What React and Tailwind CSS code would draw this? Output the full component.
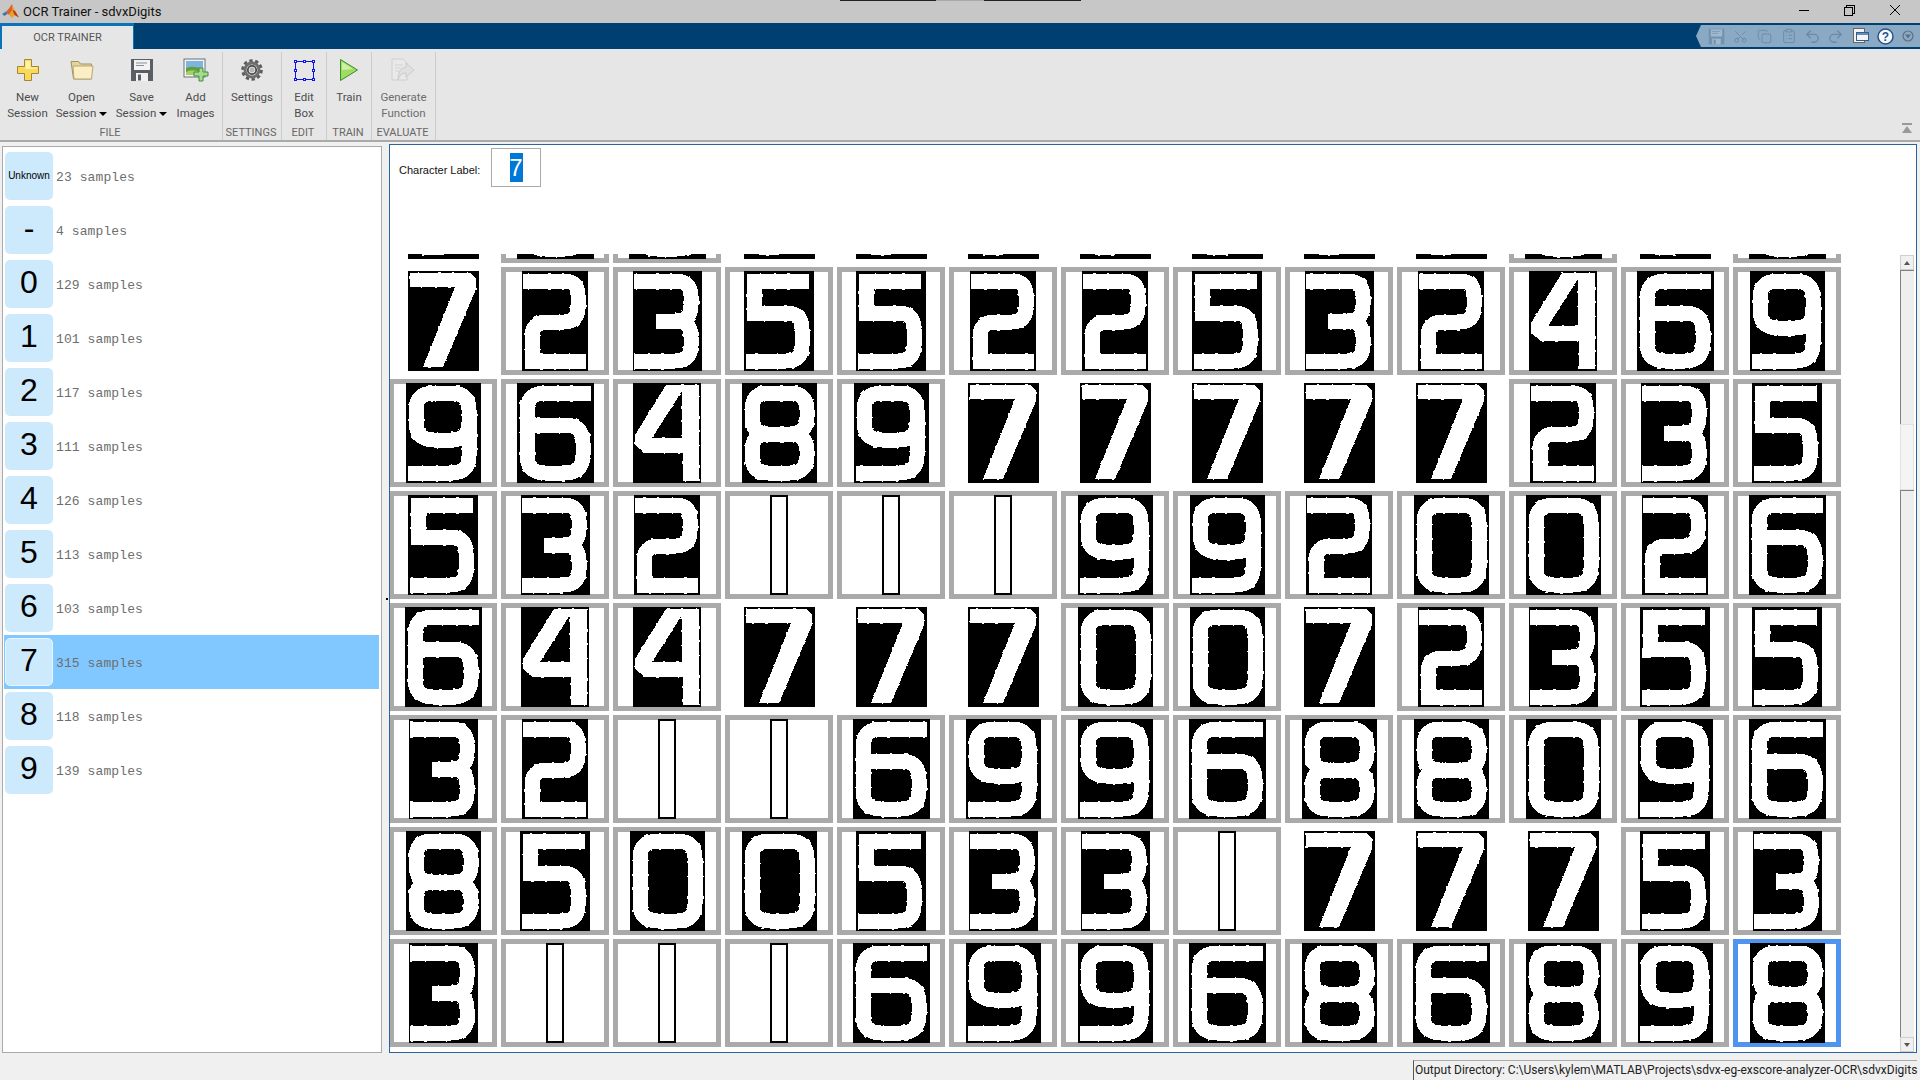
import { Scissors, Copy, ClipboardList, Undo2, Redo2 } from "lucide-react";

const UI_FONT = "font-['Roboto','Liberation_Sans',sans-serif]";

// sample thumbnails are binary images, drawn as white strokes on black
const SAMPLES = {
  0: { w: 75, d: "M28 10 H47 Q65 10 65 27 V73 Q65 90 47 90 H28 Q10 90 10 73 V27 Q10 10 28 10 Z" },
  2: { w: 66, d: "M1 10 H42 Q56 10 56 24 V36 Q56 51 42 51 H25 Q10 51 10 66 V90 H64" },
  3: { w: 69, d: "M1 10 H42 Q58 10 58 25 V34 Q58 50 42 50 H23 M42 50 Q58 50 58 66 V75 Q58 90 42 90 H1" },
  5: { w: 70, d: "M65 10 H10 V42 H42 Q58 42 58 58 V75 Q58 90 42 90 H2" },
  6: { w: 77, d: "M74 10 H28 Q10 10 10 28 V72 Q10 90 28 90 H48 Q66 90 66 72 V60 Q66 42 48 42 H10" },
  8: { w: 75, d: "M26 10 H48 Q65 10 65 27 V34 Q65 51 48 51 H26 Q10 51 10 34 V27 Q10 10 26 10 Z M26 51 H48 Q65 51 65 68 V73 Q65 90 48 90 H26 Q10 90 10 73 V68 Q10 51 26 51 Z" },
  9: { w: 75, d: "M28 10 H45 Q63 10 63 27 V39 Q63 57 45 57 H28 Q10 57 10 39 V27 Q10 10 28 10 Z M63 30 V73 Q63 90 45 90 H2" },
};

// 4 and 7 have slanted strokes of changing width, so they are filled shapes
const FILLED = {
  4: { w: 68, d: "M33 2 H66 V98 H50 V70 H12 L2 62 V52 Z M49 8 V55 H19 Z" },
  7: { w: 71, d: "M2 2 H62 L68 8 V18 L35 96 H15 L47 16 H2 Z" },
};

const ROWS = [
  "7667777777676",
  "7235522532469",
  "9648977777235",
  "5321119920026",
  "6447770072355",
  "3211699688096",
  "8500533177753",
  "3111699686898",
];

function SampleImage({ digit, seed }) {
  if (digit === "1") {
    return <div className="h-[100px] w-[18px] shrink-0 border-2 border-black bg-white" />;
  }
  const filled = FILLED[digit];
  const stroked = SAMPLES[digit];
  const w = (filled || stroked).w;
  // the dashed under-stroke roughens the edges like a thresholded image
  return (
    <svg width={w} height="100" viewBox={`0 0 ${w} 100`} className="shrink-0" shapeRendering="crispEdges">
      <rect width={w} height="100" fill="#000" />
      {filled ? (
        <>
          <path d={filled.d} fill="#fff" fillRule="evenodd" />
          <path d={filled.d} fill="none" stroke="#fff" strokeWidth="1.4" strokeDasharray="2 13 1 19 3 11" strokeDashoffset={seed} />
        </>
      ) : (
        <>
          <path d={stroked.d} fill="none" stroke="#fff" strokeWidth="17" strokeDasharray="2 13 1 19 3 11" strokeDashoffset={seed} />
          <path d={stroked.d} fill="none" stroke="#fff" strokeWidth="15" />
        </>
      )}
    </svg>
  );
}

function SampleCell({ digit, active, seed }) {
  let border = "border-[#aaaaaa]";
  if (digit === "7") border = "border-white";
  if (active) border = "border-[#4f94ef]";
  return (
    <div className={`flex h-[108px] w-[108px] items-center justify-center border-[5px] bg-white ${border}`}>
      <SampleImage digit={digit} seed={seed} />
    </div>
  );
}

const LABELS = [
  { label: "Unknown", count: 23 },
  { label: "-", count: 4 },
  { label: "0", count: 129 },
  { label: "1", count: 101 },
  { label: "2", count: 117 },
  { label: "3", count: 111 },
  { label: "4", count: 126 },
  { label: "5", count: 113 },
  { label: "6", count: 103 },
  { label: "7", count: 315, selected: true },
  { label: "8", count: 118 },
  { label: "9", count: 139 },
];

function LabelRow({ label, count, selected }) {
  return (
    <div className={`flex h-[54px] w-[375px] items-center pl-px ${selected ? "bg-[#80c8ff]" : ""}`}>
      <div className={`flex h-[48px] w-[48px] items-center justify-center rounded-[5px] bg-[#cdeafd] font-['Liberation_Sans',sans-serif] text-black ${selected ? "border border-[#e6f5ff]" : ""}`}>
        {label === "Unknown" ? (
          <span className="text-[10px] leading-none">{label}</span>
        ) : (
          <span className="-mt-1 text-[32px] leading-none">{label}</span>
        )}
      </div>
      <span className="ml-[3px] mt-[4px] font-['Liberation_Mono',monospace] text-[13px] tracking-[0.1px] text-[#6e6e6e]">{count} samples</span>
    </div>
  );
}

function MatlabLogo() {
  return (
    <svg width="17" height="16" viewBox="0 0 17 16">
      <path d="M0 10 L4 7.5 L6 9.5 L2.5 12 Z" fill="#3a79b0" />
      <path d="M4 7.5 L7 4.5 L10 0 L11 5 L7 11 Z" fill="#d9622b" />
      <path d="M10 0 L13 7 L17 13.5 L12.5 11 L10 14 L7 11 L10.5 6 Z" fill="#f0a020" />
      <path d="M10.5 6 L13 7 L17 13.5 L12.5 11 Z" fill="#b83a1c" />
    </svg>
  );
}

function NewIcon() {
  return (
    <svg width="24" height="24" viewBox="0 0 24 24">
      <path d="M8.5 1.5 H15.5 V8.5 H22.5 V15.5 H15.5 V22.5 H8.5 V15.5 H1.5 V8.5 H8.5 Z" fill="#f8d95a" stroke="#a58632" />
      <path d="M9.5 3 H14.5 V9.5 H21 V11 H9.5 Z" fill="#fdf0a8" />
    </svg>
  );
}

function OpenIcon() {
  return (
    <svg width="24" height="24" viewBox="0 0 24 24">
      <path d="M1 3.5 H8.5 L10.5 6 H21.5 V21 H3.5 Z" fill="#e8d398" stroke="#a39163" />
      <path d="M3 8 H23 L21.5 21 H4 Z" fill="#fbeec4" stroke="#b7a777" />
    </svg>
  );
}

function SaveIcon({ body = "#5a5f63", face = "#f2f2f2", line = "#8a8f92", size = 24 }) {
  return (
    <svg width={size} height={size} viewBox="0 0 24 24">
      <path d="M1 1 H23 V23 H1 Z" fill={body} />
      <rect x="4" y="2" width="16" height="10" fill={face} />
      <rect x="6" y="4.5" width="11" height="1" fill={line} />
      <rect x="6" y="7" width="8" height="1" fill={line} />
      <rect x="6" y="15" width="12" height="8" fill={face} />
      <rect x="8" y="16.5" width="3" height="6" fill={body} />
    </svg>
  );
}

function AddImagesIcon() {
  return (
    <svg width="26" height="24" viewBox="0 0 26 24">
      <rect x="1" y="1" width="21" height="18" fill="#f4f4f4" stroke="#6d7378" />
      <rect x="3" y="3" width="17" height="7" fill="#7fb4e0" />
      <path d="M3 10 Q10 7 20 11 V17 H3 Z" fill="#5f9f3c" />
      <path d="M3 14 Q9 10 20 15 V17 H3 Z" fill="#a7cf6a" />
      <path d="M16 10 H20 V14 H25 V18 H20 V23 H16 V18 H11 V14 H16 Z" fill="#a6dc8c" stroke="#3f8f3f" />
    </svg>
  );
}

function GearIcon() {
  return (
    <svg width="22" height="22" viewBox="0 0 22 22">
      <circle cx="11" cy="11" r="9" fill="none" stroke="#5c5c5c" strokeWidth="3.6" strokeDasharray="3.2 2.45" />
      <circle cx="11" cy="11" r="7" fill="none" stroke="#6f6f6f" strokeWidth="3" />
      <circle cx="11" cy="11" r="4.2" fill="none" stroke="#4b4b4b" strokeWidth="1.8" />
      <circle cx="11" cy="11" r="2.4" fill="#b5b5b5" />
    </svg>
  );
}

function EditBoxIcon() {
  const handles = [[1, 1], [10, 1], [19, 1], [1, 10], [19, 10], [1, 19], [10, 19], [19, 19]];
  return (
    <svg width="22" height="22" viewBox="0 0 22 22" shapeRendering="crispEdges">
      <rect x="2" y="2" width="18" height="18" fill="none" stroke="#1212e6" />
      {handles.map(([x, y]) => (
        <rect key={`${x}-${y}`} x={x} y={y} width="2.5" height="2.5" fill="#fff" stroke="#1212e6" />
      ))}
    </svg>
  );
}

function TrainIcon() {
  return (
    <svg width="20" height="24" viewBox="0 0 20 24">
      <path d="M1.5 1.5 L18.5 12 L1.5 22.5 Z" fill="#9fdc62" stroke="#3f8a2a" />
      <path d="M3 4 L14 11 L3 12 Z" fill="#cdf0a6" />
    </svg>
  );
}

function GenerateIcon() {
  return (
    <svg width="26" height="24" viewBox="0 0 26 24" opacity="0.55">
      <path d="M2 1 H13 L17 5 V22 H2 Z" fill="#ececec" stroke="#bdbdbd" />
      <path d="M5 7 H13 M5 10 H11 M5 13 H9" stroke="#c4c4c4" />
      <path d="M16 5 L24 12 L16 19 V15 Q10 15 8 22 Q8 10 16 9 Z" fill="#dcdcdc" stroke="#b5b5b5" />
    </svg>
  );
}

function HelpIcon() {
  return (
    <svg width="17" height="17" viewBox="0 0 17 17">
      <circle cx="8.5" cy="8.5" r="7.5" fill="#f7f9fc" stroke="#27558a" strokeWidth="1.5" />
      <text x="8.5" y="12.8" textAnchor="middle" fontSize="12" fontWeight="700" fontFamily="Liberation Sans" fill="#27558a">?</text>
    </svg>
  );
}

function ToolButton({ icon, lines, caret, className = "" }) {
  return (
    <div className={`flex flex-col items-center pt-[6px] ${className}`}>
      <div className="flex h-[24px] items-center justify-center">{icon}</div>
      <div className={`mt-[7px] text-center text-[11.5px] leading-[16px] ${caret === "off" ? "text-[#6d6d6d]" : "text-[#4d4d4d]"}`}>
        {lines.map((line, i) => (
          <div key={line} className="whitespace-nowrap">
            {line}
            {caret === true && i === 1 && (
              <span className="ml-[3px] inline-block border-x-[4px] border-t-[4px] border-x-transparent border-t-black align-middle" />
            )}
          </div>
        ))}
      </div>
    </div>
  );
}

function Section({ title, width, children }) {
  return (
    <div className={`mt-[3px] flex h-[88px] flex-col justify-between border-r border-[#cccccc] ${width}`}>
      <div className="flex justify-center gap-[3px]">{children}</div>
      <div className="pr-[2px] text-center text-[11px] leading-[14px] text-[#666666]">{title}</div>
    </div>
  );
}

function Scrollbar() {
  return (
    <div className="ml-auto mr-[2px] mt-px flex w-[14px] shrink-0 flex-col bg-[#eeeeee]">
      <div className="flex h-[15px] items-center justify-center border border-[#cfcfcf] bg-[#f0f0f0]">
        <div className="border-x-[3px] border-b-[4px] border-x-transparent border-b-[#555555]" />
      </div>
      <div className="h-[154px] border-l border-t border-[#808080] bg-[#eeeeee]" />
      <div className="h-[66px] border border-[#e2e2e2] bg-[#f4f4f4]" />
      <div className="flex-1 border-l border-t border-[#808080] bg-[#eeeeee]" />
      <div className="flex h-[15px] items-center justify-center border border-[#cfcfcf] bg-[#f0f0f0]">
        <div className="border-x-[3px] border-t-[4px] border-x-transparent border-t-[#555555]" />
      </div>
    </div>
  );
}

export default function App() {
  return (
    <div className={`flex h-screen w-full flex-col overflow-hidden bg-[#f0f0f0] ${UI_FONT}`}>
      {/* Title bar */}
      <div className="relative flex h-[23px] shrink-0 items-center bg-[#c7c7c7] pl-[2px]">
        <div className="absolute left-[840px] top-0 flex h-px">
          <div className="w-[96px] bg-[#222222]" />
          <div className="w-[48px] bg-[#a8a8a8]" />
          <div className="w-[97px] bg-[#222222]" />
        </div>
        <MatlabLogo />
        <span className="ml-[4px] text-[13px] text-[#111111]">OCR Trainer - sdvxDigits</span>
        <div className="-mt-[3px] ml-auto flex items-center">
          <svg width="12" height="12" viewBox="0 0 12 12" className="mr-[33px]" shapeRendering="crispEdges">
            <path d="M1 6 H11" stroke="#000" />
          </svg>
          <svg width="12" height="12" viewBox="0 0 12 12" className="mr-[34px]" shapeRendering="crispEdges">
            <path d="M3 3 V1 H11 V9 H9 M1 3 H9 V11 H1 Z" fill="none" stroke="#000" />
          </svg>
          <svg width="12" height="12" viewBox="0 0 12 12" className="mr-[19px]">
            <path d="M1 1 L11 11 M11 1 L1 11" stroke="#000" />
          </svg>
        </div>
      </div>

      {/* Tab strip and quick access bar */}
      <div className="flex h-[26px] shrink-0 bg-[#003f72]">
        <div className="h-full w-[134px] bg-[#0a73b8] pl-[2px] pr-px pt-[3px]">
          <div className="flex h-full items-center justify-center bg-[#e6e6e6] pt-[2px] text-[11px] text-[#555555]">OCR TRAINER</div>
        </div>
        <div className="ml-auto mt-[2px] flex h-[22px] w-[224px] items-center bg-[#8aa9c4] pl-[12px] text-[#6d8ba6] [clip-path:polygon(0_50%,5px_0,100%_0,100%_100%,5px_100%)]">
          <SaveIcon body="#7393ad" face="#a0b8cd" line="#7393ad" size={17} />
          <Scissors size={15} strokeWidth={1.5} className="ml-[8px] -rotate-90" />
          <Copy size={15} strokeWidth={1.5} className="ml-[9px]" />
          <ClipboardList size={16} strokeWidth={1.5} className="ml-[9px]" />
          <Undo2 size={17} strokeWidth={2} className="ml-[7px]" />
          <Redo2 size={17} strokeWidth={2} className="ml-[6px]" />
          <svg width="16" height="16" viewBox="0 0 16 16" className="ml-[9px]" shapeRendering="crispEdges">
            <rect x="0.5" y="0.5" width="11" height="14" fill="#f2f2f2" stroke="#666" />
            <rect x="3.5" y="4.5" width="12" height="8" fill="#f4f4f4" stroke="#345f8c" />
            <rect x="4" y="5" width="11" height="2" fill="#5f8fbd" />
          </svg>
          <div className="ml-[8px] flex"><HelpIcon /></div>
          <svg width="12" height="12" viewBox="0 0 12 12" className="ml-[8px]">
            <circle cx="6" cy="6" r="5" fill="none" stroke="#5d6f80" strokeWidth="1.2" />
            <path d="M3 4.5 H9 L6 8.5 Z" fill="#5d6f80" />
          </svg>
        </div>
      </div>

      {/* Toolstrip */}
      <div className="flex h-[93px] shrink-0 items-start border-b-2 border-[#a9a9a9] bg-[#e6e6e6]">
        <Section title="FILE" width="w-[223px]">
          <ToolButton icon={<NewIcon />} lines={["New", "Session"]} className="w-[46px]" />
          <ToolButton icon={<OpenIcon />} lines={["Open", "Session"]} caret className="w-[56px]" />
          <ToolButton icon={<SaveIcon />} lines={["Save", "Session"]} caret className="w-[58px]" />
          <ToolButton icon={<AddImagesIcon />} lines={["Add", "Images"]} className="w-[44px]" />
        </Section>
        <Section title="SETTINGS" width="w-[59px]">
          <ToolButton icon={<GearIcon />} lines={["Settings"]} />
        </Section>
        <Section title="EDIT" width="w-[45px]">
          <ToolButton icon={<EditBoxIcon />} lines={["Edit", "Box"]} />
        </Section>
        <Section title="TRAIN" width="w-[45px]">
          <ToolButton icon={<TrainIcon />} lines={["Train"]} />
        </Section>
        <Section title="EVALUATE" width="w-[64px]">
          <ToolButton icon={<GenerateIcon />} lines={["Generate", "Function"]} caret="off" />
        </Section>
        <div className="ml-auto mr-[8px] mt-[74px] flex flex-col items-center">
          <div className="h-[2px] w-[10px] bg-[#9a9a9a]" />
          <div className="mt-px border-x-[5px] border-b-[7px] border-x-transparent border-b-[#9a9a9a]" />
        </div>
      </div>

      {/* Main area */}
      <div className="relative flex min-h-0 flex-1">
        <div className="absolute left-[386px] top-[456px] h-[2px] w-[2px] bg-black" />
        <div className="ml-[2px] mt-[4px] w-[380px] border border-[#aaaaaa] bg-white pl-px pt-[2px]">
          {LABELS.map((item) => (
            <LabelRow key={item.label} {...item} />
          ))}
        </div>

        <div className="ml-[7px] mr-[3px] mt-[2px] flex min-w-0 flex-1 flex-col border border-[#2a64a0] bg-white">
          <div className="flex h-[109px] shrink-0 items-start pl-[9px] pt-[3px]">
            <span className="mt-[15px] w-[92px] font-['Liberation_Sans',sans-serif] text-[11px] leading-[14px] text-[#111111]">Character Label:</span>
            <div className="flex h-[39px] w-[50px] items-center justify-center border border-[#aaaaaa]">
              <span className="flex h-[29px] w-[13px] items-center justify-center bg-[#0078d7] font-['Liberation_Sans',sans-serif] text-[24px] leading-none text-white">7</span>
            </div>
          </div>
          <div className="flex min-h-0 flex-1">
            <div className="flex min-h-0 flex-col justify-end overflow-hidden pb-[5px]">
              <div className="-ml-px grid shrink-0 grid-cols-[repeat(13,108px)] gap-1">
                {ROWS.map((row, r) =>
                  row.split("").map((digit, c) => (
                    <SampleCell key={`${r}-${c}`} digit={digit} seed={r * 7 + c * 3} active={r === 7 && c === 12} />
                  ))
                )}
              </div>
            </div>
            <Scrollbar />
          </div>
        </div>
      </div>

      {/* Status bar */}
      <div className="flex h-[27px] shrink-0 justify-end">
        <div className="mr-[3px] mt-[7px] flex h-[20px] w-[504px] items-center border-l border-t border-l-[#555555] border-t-[#aaaaaa] pb-[2px] pl-px text-[12px] text-[#222222]">
          <span className="whitespace-nowrap">Output Directory: C:\Users\kylem\MATLAB\Projects\sdvx-eg-exscore-analyzer-OCR\sdvxDigits</span>
        </div>
      </div>
    </div>
  );
}
